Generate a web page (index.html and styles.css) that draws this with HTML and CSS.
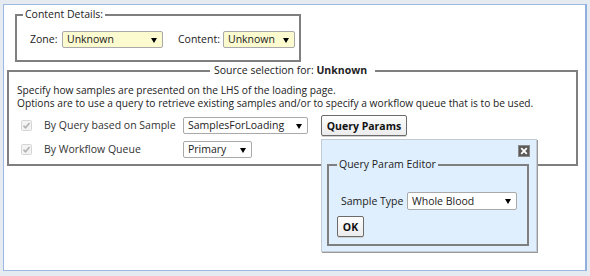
FILE: index.html
```html
<!DOCTYPE html>
<html>
<head>
<meta charset="utf-8">
<link rel="stylesheet" href="styles.css">
</head>
<body>
<div class="frame">
  <fieldset class="box details">
    <legend class="legend-left">Content Details:</legend>
    <div class="detail-row">
      <span class="lbl lbl-zone">Zone:</span>
      <div class="select yellow sel-zone"><span>Unknown</span><i class="arrow"></i></div>
      <span class="lbl lbl-content">Content:</span>
      <div class="select yellow sel-content"><span>Unknown</span><i class="arrow"></i></div>
    </div>
  </fieldset>

  <fieldset class="box source">
    <legend class="legend-center">Source selection for: <b>Unknown</b></legend>
    <p class="info">Specify how samples are presented on the LHS of the loading page.<br>Options are to use a query to retrieve existing samples and/or to specify a workflow queue that is to be used.</p>
    <div class="opt-row row-query">
      <span class="check-cell"><svg class="check" width="11" height="11" viewBox="0 0 11 11"><rect x="0.5" y="0.5" width="10" height="10" rx="1" fill="#f3f3f3" stroke="#d6d6d6"/><path d="M2.5 5.8 L4.5 7.8 L8.5 3" fill="none" stroke="#b0b0b0" stroke-width="1.6"/></svg></span>
      <span class="opt-label">By Query based on Sample</span>
      <div class="select sel-query"><span>SamplesForLoading</span><i class="arrow"></i></div>
      <button class="btn btn-params">Query Params</button>
    </div>
    <div class="opt-row row-queue">
      <span class="check-cell"><svg class="check" width="11" height="11" viewBox="0 0 11 11"><rect x="0.5" y="0.5" width="10" height="10" rx="1" fill="#f3f3f3" stroke="#d6d6d6"/><path d="M2.5 5.8 L4.5 7.8 L8.5 3" fill="none" stroke="#b0b0b0" stroke-width="1.6"/></svg></span>
      <span class="opt-label">By Workflow Queue</span>
      <div class="select sel-queue"><span>Primary</span><i class="arrow"></i></div>
    </div>
  </fieldset>

  <div class="popup">
    <button class="close" aria-label="Close"><svg width="12" height="12" viewBox="0 0 12 12"><rect x="0" y="0" width="12" height="12" fill="#5b5b5b"/><rect x="0.5" y="0.5" width="11" height="11" fill="none" stroke="#8a8a8a"/><path d="M3.2 3.2 L8.8 8.8 M8.8 3.2 L3.2 8.8" stroke="#fff" stroke-width="1.8"/></svg></button>
    <fieldset class="box editor">
      <legend class="legend-left">Query Param Editor</legend>
      <div class="param-row">
        <span class="param-label">Sample Type</span>
        <div class="select sel-type"><span>Whole Blood</span><i class="arrow"></i></div>
      </div>
      <button class="btn btn-ok">OK</button>
    </fieldset>
  </div>
</div>
</body>
</html>
```

FILE: styles.css
```css
* { box-sizing: border-box; }
html, body { margin: 0; padding: 0; }
body {
  background: #e6ebf2;
  font-family: "Open Sans", "Noto Sans", sans-serif;
  font-size: 10.5px;
  line-height: 13px;
  color: #222;
}
.frame {
  position: relative;
  margin: 4px 3px 0 3px;
  height: 267px;
  background: #fff;
  border: 1px solid #9db8e2;
  border-right: 2px solid #8fb0df;
  padding: 1px 7px 0 3px;
}
.box {
  border: 2px solid #7f7f7f;
  margin: 0;
  min-width: 0;
}
.box legend {
  padding: 0 2px;
  line-height: 13px;
}
.legend-left { margin-left: -7px; }
.legend-center { margin: 0 auto; padding: 0 8px 0 4px !important; }

/* content details */
.details {
  margin: 2px 0 0 8px;
  width: 286px;
  padding: 10px 4px 12px 13px;
}
.detail-row { display: flex; align-items: center; height: 17px; }
.lbl-zone { width: 32px; }
.lbl-content { width: 45px; margin-left: 15px; }
.select {
  position: relative;
  display: flex;
  align-items: center;
  height: 17px;
  padding: 0 0 0 4px;
  border: 1px solid #a9a9a9;
  border-radius: 2px;
  background: #fff;
  white-space: nowrap;
}
.select.yellow { background: #fbfbcf; }
.arrow {
  position: absolute;
  right: 5px;
  top: 6px;
  width: 0;
  height: 0;
  border-left: 3px solid transparent;
  border-right: 3px solid transparent;
  border-top: 5px solid #000;
}
.sel-zone { width: 101px; }
.sel-content { width: 72px; }

/* source */
.source {
  margin: 2px 0 0 0;
  padding: 7px 8px 6px 8px;
}
.info { margin: 0; font-size: 10.2px; }
.opt-row { display: flex; align-items: center; margin-top: 5px; }
.row-query { height: 21px; }
.row-queue { height: 17px; }
.check-cell { width: 27px; padding-left: 4px; display: flex; }
.opt-label { width: 139px; color: #333; }
.sel-query { width: 125px; }
.sel-queue { width: 69px; }
.btn {
  font-family: inherit;
  font-size: 10.5px;
  font-weight: bold;
  color: #111;
  background: linear-gradient(#fdfdfd, #ececec);
  border: 1px solid #6b6b6b;
  border-radius: 2px;
  padding: 0;
  height: 21px;
  box-shadow: 0 1px 0 #d0d0d0;
}
.btn-params { width: 86px; margin-left: 13px; }

/* popup */
.popup {
  position: absolute;
  left: 317px;
  top: 134px;
  width: 216px;
  height: 113px;
  background: #dfeffd;
  border: 1px solid #c3ccd4;
  box-shadow: 1px 1px 0 #9a9a9a;
  padding: 18px 5px 0 5px;
}
.close {
  position: absolute;
  right: 6px;
  top: 5px;
  width: 12px;
  height: 12px;
  padding: 0;
  border: 0;
  background: none;
  display: block;
}
.close svg { display: block; }
.editor {
  width: 202px;
  padding: 21px 4px 7px 8px;
}
.editor legend { margin-left: 0; }
.param-row { display: flex; align-items: center; margin-left: 4px; }
.param-label { width: 66px; color: #222; }
.sel-type { width: 110px; height: 18px; }
.btn-ok { display: block; width: 27px; margin-top: 6px; }
```
